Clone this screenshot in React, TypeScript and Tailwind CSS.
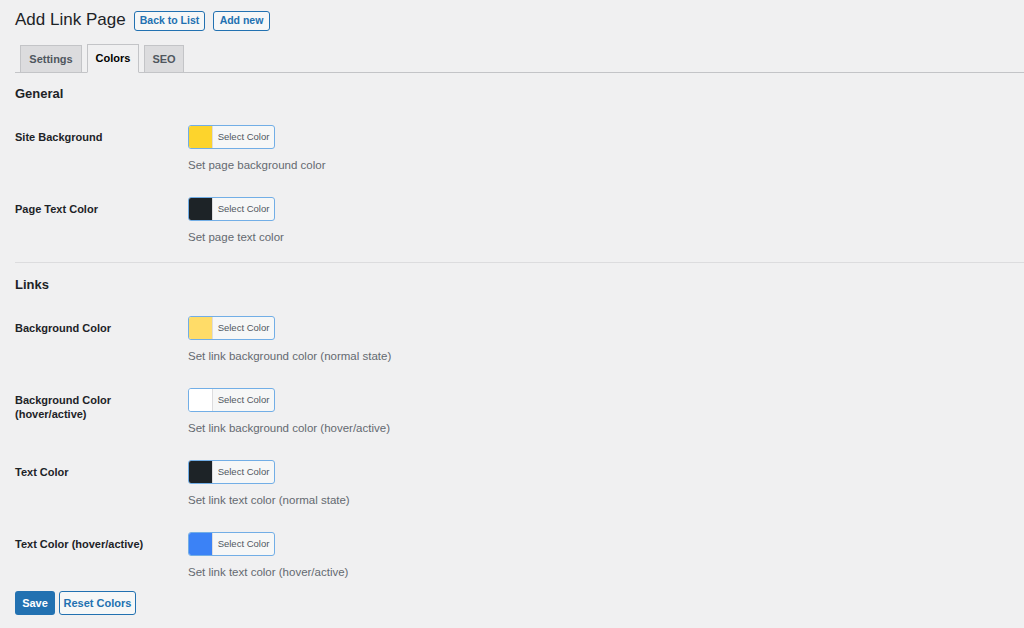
import React from 'react';

type Row = { label: string[]; color: string; desc: string };

const general: Row[] = [
  { label: ['Site Background'], color: '#fdd42c', desc: 'Set page background color' },
  { label: ['Page Text Color'], color: '#1d2327', desc: 'Set page text color' },
];

const links: Row[] = [
  { label: ['Background Color'], color: '#ffdc68', desc: 'Set link background color (normal state)' },
  { label: ['Background Color', '(hover/active)'], color: '#ffffff', desc: 'Set link background color (hover/active)' },
  { label: ['Text Color'], color: '#1d2327', desc: 'Set link text color (normal state)' },
  { label: ['Text Color (hover/active)'], color: '#3b82f6', desc: 'Set link text color (hover/active)' },
];

function ColorRow({ row }: { row: Row }) {
  return (
    <div className="flex h-[72px] pt-3">
      <div className="w-[173px] pt-[5px] text-[11px] leading-[14px] font-bold text-[#1d2327]">
        {row.label.map((l) => (
          <div key={l}>{l}</div>
        ))}
      </div>
      <div className="flex flex-col">
        <div className="flex h-6 w-[87px] overflow-hidden rounded-[3px] border border-[#72aee6] bg-[#f6f7f7]">
          <div className="w-6 border-r border-[#dcdcde]" style={{ background: row.color }} />
          <div className="flex flex-1 items-center justify-center text-[9.5px] text-[#50575e]">Select Color</div>
        </div>
        <p className="mt-[9px] text-[11.5px] leading-[14px] text-[#646970]">{row.desc}</p>
      </div>
    </div>
  );
}

export default function App() {
  return (
    <main className="min-h-screen bg-[#f0f0f1] pl-[15px] font-['Liberation_Sans',Arial,sans-serif] text-[#1d2327]">
      <div className="flex h-[32px] items-end gap-2 pb-px">
        <h1 className="mb-[1px] w-[112px] text-[17px] leading-5 text-[#1d2327]">Add Link Page</h1>
        <button className="ml-[-1px] h-5 w-[71px] rounded-[3px] border border-[#2271b1] bg-[#f6f7f7] text-[10.5px] font-bold text-[#2271b1]">
          Back to List
        </button>
        <button className="h-5 w-[57px] rounded-[3px] border border-[#2271b1] bg-[#f6f7f7] text-[10.5px] font-bold text-[#2271b1]">
          Add new
        </button>
      </div>

      <div className="mt-[12px] flex items-end gap-[5px] border-b border-[#c3c4c7] pl-[5px]">
        <div className="-mb-px flex h-7 w-[62px] items-center justify-center border border-[#c3c4c7] bg-[#dcdcde] text-[11px] font-bold text-[#50575e]">
          Settings
        </div>
        <div className="-mb-px flex h-[29px] w-[52px] items-center justify-center border border-[#c3c4c7] border-b-[#f0f0f1] bg-[#f0f0f1] text-[11px] font-bold text-black">
          Colors
        </div>
        <div className="-mb-px flex h-7 w-10 items-center justify-center border border-[#c3c4c7] bg-[#dcdcde] text-[11px] font-bold text-[#50575e]">
          SEO
        </div>
      </div>

      <h2 className="mt-3 text-[13px] leading-[18px] font-bold">General</h2>
      <div className="mt-[10px]">
        {general.map((r) => (
          <ColorRow key={r.desc} row={r} />
        ))}
      </div>

      <div className="mt-[5px] border-t border-[#dcdcde]" />

      <h2 className="mt-[13px] text-[13px] leading-[18px] font-bold">Links</h2>
      <div className="mt-[10px]">
        {links.map((r) => (
          <ColorRow key={r.desc} row={r} />
        ))}
      </div>

      <div className="-mt-[1px] flex gap-1">
        <button className="h-6 w-10 rounded-[3px] bg-[#2271b1] text-[11px] font-bold text-white">Save</button>
        <button className="h-6 w-[77px] rounded-[3px] border border-[#2271b1] bg-[#f6f7f7] text-[11px] font-bold text-[#2271b1]">
          Reset Colors
        </button>
      </div>
    </main>
  );
}
